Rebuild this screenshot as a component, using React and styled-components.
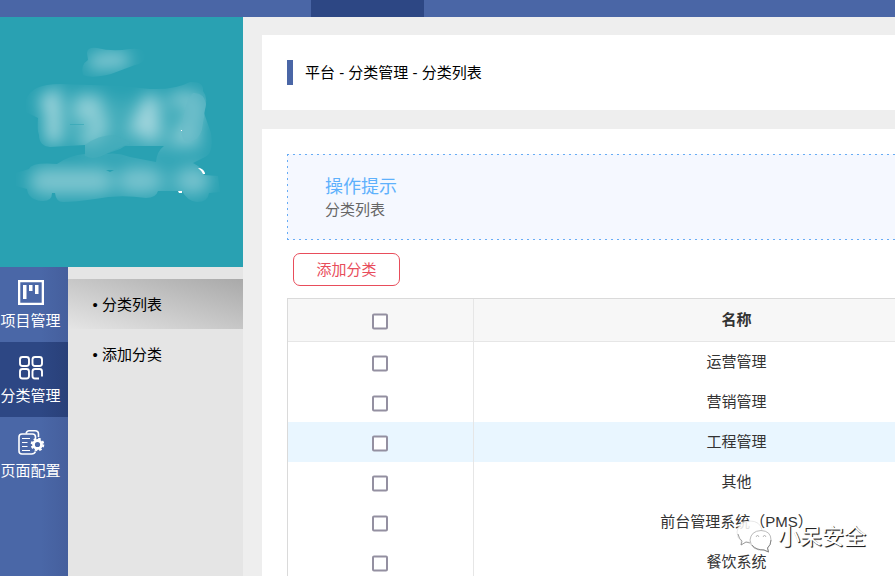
import React from "react";
import styled, { createGlobalStyle, css } from "styled-components";

const GlobalStyle = createGlobalStyle`
  * { box-sizing: border-box; }
  html, body { margin: 0; overflow: hidden; }
  body {
    background: #eeeeee;
    color: #000;
    font: 15px/20px "Liberation Sans", "Noto Sans CJK SC", sans-serif;
  }
`;

const Page = styled.div`
  position: relative;
  display: flex;
  flex-direction: column;
  width: 100%;
  height: 100vh;
  overflow: hidden;
`;

const TopBar = styled.header`
  flex: none;
  display: flex;
  height: 17px;
  padding-left: 311px;
  background: #4a66a6;
`;

const ActiveTab = styled.div`
  width: 113px;
  background: #2d4784;
`;

const Body = styled.div`
  flex: 1;
  display: flex;
  min-height: 0;
`;

const Sidebar = styled.aside`
  flex: none;
  display: flex;
  flex-direction: column;
  width: 243px;
`;

const ClockPanel = styled.div`
  flex: none;
  height: 250px;
  background: #29a1b2;

  svg { display: block; }
`;

const Menus = styled.div`
  flex: 1;
  display: flex;
  min-height: 0;
`;

const Rail = styled.nav`
  width: 68px;
  background: linear-gradient(90deg, #4a67a7 60%, #455f9d);
`;

const RailItem = styled.div`
  display: flex;
  flex-direction: column;
  align-items: flex-start;
  height: 75px;
  padding-top: 12px;
  color: #fff;
  white-space: nowrap;
  ${(p) => p.$active && css`background: linear-gradient(90deg, #2d4784 60%, #294079);`}

  svg { display: block; margin: 0 0 3px 17px; }
  span { margin-left: 0.5px; }
`;

const SubMenu = styled.nav`
  flex: 1;
  padding-top: 12px;
  background: #e5e5e5;
`;

const SubItem = styled.div`
  height: 50px;
  padding: 1px 0 0 24.5px;
  line-height: 50px;
  ${(p) => p.$active && css`background: linear-gradient(to top right, #e5e5e5, #a9a9a9);`}
`;

const Main = styled.main`
  flex: 1;
  min-width: 0;
  display: flex;
  flex-direction: column;
  gap: 19px;
  padding: 18px 0 0 19px;
`;

const Crumbs = styled.section`
  flex: none;
  display: flex;
  align-items: center;
  gap: 12px;
  height: 75px;
  padding-left: 25px;
  background: #fff;
`;

const Marker = styled.i`
  width: 6px;
  height: 25px;
  background: #4a66a6;
`;

const Content = styled.section`
  flex: 1;
  min-height: 0;
  padding: 25px 0 0 25px;
  background: #fff;
  overflow: hidden;
`;

const Tip = styled.div`
  position: relative;
  height: 86px;
  padding: 21px 0 0 38px;
  background: #f5f8ff;
  overflow: hidden;
`;

const TipBorder = styled.svg`
  position: absolute;
  inset: 0;
  width: 100%;
  height: 100%;
`;

const TipTitle = styled.div`
  color: #5eb1fc;
  font-size: 18px;
  line-height: 25px;
`;

const TipText = styled.div`
  color: #666;
`;

const AddButton = styled.button`
  display: block;
  width: 107px;
  height: 33px;
  margin: 13px 0 12px 6px;
  padding: 0;
  border: 1px solid #e84d5b;
  border-radius: 7px;
  background: #fff;
  color: #e84d5b;
  font: inherit;
`;

const Table = styled.div`
  width: 713px;
  border: 1px solid #dadada;
  border-bottom: 0;
`;

const Row = styled.div`
  display: grid;
  grid-template-columns: 186px 1fr;
  height: 40px;
  color: #333;
  background: ${(p) => (p.$hover ? "#e9f6ff" : "#fff")};
  ${(p) => p.$head && css`
    height: 43px;
    background: #f7f7f7;
    border-bottom: 1px solid #e6e6e6;
    font-weight: bold;
  `}
`;

const CheckCell = styled.div`
  display: flex;
  align-items: center;
  justify-content: center;
  padding: 2px 2px 0 0;
  border-right: 1px solid #e6e6e6;
`;

const NameCell = styled.div`
  display: flex;
  align-items: center;
  justify-content: center;
`;

const Checkbox = styled.svg`
  display: block;
  width: 16px;
  height: 17px;
  margin-top: 1px;
`;

const Watermark = styled.div`
  position: absolute;
  left: 736px;
  top: 518px;
  display: flex;
  align-items: center;
  gap: 5px;
  color: #fff;
  font-size: 22px;
  line-height: 38px;
  text-shadow: 1px 1px 0.5px #222, 1px 1px 1px #777;
`;

function CheckMarkBox() {
  return (
    <Checkbox viewBox="0 0 16 17">
      <rect x="1" y="1.500" width="14" height="14" rx="1" fill="#fff" stroke="#9490a1" strokeWidth="2" />
    </Checkbox>
  );
}

function ClockSmudge() {
  const shape =
    "M87 53Q87 47 97 48Q112 52 130 49Q145 47 145 56Q144 64 135 65L111 74Q91 79 83 75Q80 65 88 60Z" +
    "M26 100Q31 84 60 84L120 86L150 89Q175 90 190 82Q204 81 203 91Q209 98 204 113L211 133Q214 153 205 157L193 163Q203 168 204 175L218 176L220 192L209 193Q208 202 197 202Q187 201 182 191L158 191Q156 198 146 198Q119 194 95 199Q75 202 63 202Q56 202 55 193L52 193Q52 202 41 201Q28 199 27 189L16 186L16 173L29 169Q32 162 57 164Q70 155 85 154L85 145L50 147Q39 146 39 135Q37 131 38 118L26 112Z";
  return (
    <svg width="243" height="250" viewBox="0 17 243 250">
      <defs>
        <filter id="soft" x="-50%" y="-50%" width="200%" height="200%">
          <feGaussianBlur stdDeviation="8" />
        </filter>
        <clipPath id="smudge">
          <path d={shape} />
        </clipPath>
        <clipPath id="gap">
          <path d="M0 17H243V267H0ZM125 146H164Q157 151 156 162L130 157Q118 152 106 154L120 149Z" clipRule="evenodd" />
        </clipPath>
      </defs>
      <g clipPath="url(#gap)">
        <g clipPath="url(#smudge)">
          <g filter="url(#soft)" fill="none" stroke="#c3e4e9" strokeLinecap="round">
            <path d="M96 62L107 60H122" strokeWidth="16" opacity=".6" />
            <path d="M46 102L53 98V138" strokeWidth="14" opacity=".78" />
            <path d="M96 102H82V114Q105 113 99 131L87 140" strokeWidth="15" opacity=".6" />
            <path d="M151 101L139 126H154M151 101V135" strokeWidth="15" opacity=".74" />
            <path d="M175 99Q205 93 195 117L180 138H195" strokeWidth="14" opacity=".54" />
            <path d="M65 122H180" strokeWidth="45" opacity=".16" />
            <path d="M42 181H99" strokeWidth="26" opacity=".44" />
            <path d="M46 182H195" strokeWidth="30" opacity=".15" />
            <path d="M132 180H148M190 180H197" strokeWidth="26" opacity=".42" />
            <path d="M95 151H200" strokeWidth="15" opacity=".11" />
          </g>
        </g>
      </g>
      <path d="M193 93Q204 92 206 104L202 130Q197 144 185 141Q179 136 183 118Q187 98 193 93Z" fill="#66bac8" opacity=".5" />
      <path d="M85 145Q98 135 114 135L132 143Q117 148 106 154Q93 161 85 156Z" fill="#48adbc" opacity=".5" />
      <path d="M106 170H114L110 172ZM70 124H84V124.600H70Z" fill="#29a1b2" />
      <path d="M198 168Q203 168 205 173V174H203Q202 171 198 168Z" fill="#fff" />
      <path d="M178 191H182V193H179ZM181 130H182V131H181Z" fill="#fff" />
    </svg>
  );
}

function BoardIcon() {
  return (
    <svg width="28" height="29" viewBox="0 0 28 29" fill="#fff">
      <path fillRule="evenodd" d="M1 1H27V26H1ZM3.300 3.300V23.700H24.700V3.300Z" />
      <path d="M6 6H9.500V20H6ZM12 6H15.500V12H12ZM18 6H21.500V15H18Z" />
    </svg>
  );
}

function GridIcon() {
  return (
    <svg width="28" height="29" viewBox="0 0 28 29" fill="none" stroke="#fff" strokeWidth="1.900">
      <rect x="3" y="3" width="9" height="9" rx="2.5" />
      <rect x="15.5" y="3" width="9.500" height="9" rx="2.5" />
      <rect x="3" y="15" width="9" height="9.500" rx="2.5" />
      <path d="M22 24.500H18Q15.500 24.500 15.500 22V17.500Q15.500 15 18 15H22.500Q25 15 25 17.500V22.500" />
    </svg>
  );
}

function ConfigIcon() {
  return (
    <svg width="28" height="29" viewBox="0 0 28 29" fill="none" stroke="#fff" strokeWidth="1.600">
      <path d="M18.500 22.500Q17.500 25 14.500 25H5Q2 25 2 22V8Q2 5 5 5H15.500Q18.500 5 18.500 8V9" />
      <path d="M9 4.500Q10 1.700 12 1.700H18Q21.500 1.700 21.500 5V8" />
      <path d="M5 9.500H13M5 13.500H10.500M5 17.500H10.500M5 21.500H13" strokeWidth="1.2" />
      <circle cx="20.500" cy="15.500" r="4" strokeWidth="2.800" />
      <circle cx="20.500" cy="15.500" r="5.800" strokeWidth="2" strokeDasharray="2.6 1.955" />
    </svg>
  );
}

function WechatIcon() {
  return (
    <svg width="37" height="34" viewBox="0 0 37 34" fill="#fff" stroke="#aaa" strokeWidth=".8">
      <path d="M5 21Q1 18 1 12Q2 2 14 1Q24 1 26 10L18 22L10 22L5 25Z" fillOpacity=".85" stroke="#e2e2e2" />
      <path d="M2 14Q3 19 6 21L5 25L10 22L14 23" fill="none" stroke="#888" />
      <path d="M14 20Q15 11 25 10.500Q35 11 35 20Q35 25 31.500 28L32.500 32L28 30Q15 31 14 20Z" />
      <path d="M16 25Q20 30 28 30L32.500 32L31.500 28Q35 25 35 20" fill="none" stroke="#777" />
      <path d="M20 17L21.500 15L23 17M27 17L28.500 15L30 17" fill="none" />
    </svg>
  );
}

const railItems = [
  { label: "项目管理", Icon: BoardIcon },
  { label: "分类管理", Icon: GridIcon, active: true },
  { label: "页面配置", Icon: ConfigIcon },
];

const categories = ["运营管理", "营销管理", "工程管理", "其他", "前台管理系统（PMS）", "餐饮系统"];

export default function App() {
  return (
    <Page>
      <GlobalStyle />
      <TopBar><ActiveTab /></TopBar>
      <Body>
        <Sidebar>
          <ClockPanel><ClockSmudge /></ClockPanel>
          <Menus>
            <Rail>
              {railItems.map(({ label, Icon, active }) => (
                <RailItem key={label} $active={active}>
                  <Icon />
                  <span>{label}</span>
                </RailItem>
              ))}
            </Rail>
            <SubMenu>
              <SubItem $active>• 分类列表</SubItem>
              <SubItem>• 添加分类</SubItem>
            </SubMenu>
          </Menus>
        </Sidebar>
        <Main>
          <Crumbs>
            <Marker />
            <span>平台 - 分类管理 - 分类列表</span>
          </Crumbs>
          <Content>
            <Tip>
              <TipBorder fill="none" stroke="#67acf5" strokeDasharray="2 4">
                <path d="M0 .5H620M.5 0V86M0 85.500H620" />
              </TipBorder>
              <TipTitle>操作提示</TipTitle>
              <TipText>分类列表</TipText>
            </Tip>
            <AddButton>添加分类</AddButton>
            <Table>
              <Row $head>
                <CheckCell><CheckMarkBox /></CheckCell>
                <NameCell>名称</NameCell>
              </Row>
              {categories.map((name) => (
                <Row key={name} $hover={name === "工程管理"}>
                  <CheckCell><CheckMarkBox /></CheckCell>
                  <NameCell>{name}</NameCell>
                </Row>
              ))}
            </Table>
          </Content>
        </Main>
      </Body>
      <Watermark>
        <WechatIcon />
        <span>小呆安全</span>
      </Watermark>
    </Page>
  );
}
